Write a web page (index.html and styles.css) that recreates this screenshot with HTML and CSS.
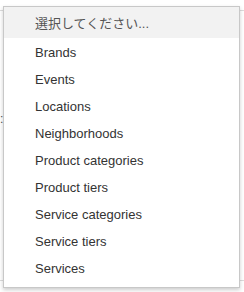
FILE: index.html
```html
<!DOCTYPE html>
<html>
<head>
<meta charset="utf-8">
<link rel="stylesheet" href="styles.css">
</head>
<body>
<div class="page">
  <div class="field">
    <span class="colon">:</span>
  </div>
  <div class="menu">
    <div class="item placeholder">選択してください...</div>
    <div class="item">Brands</div>
    <div class="item">Events</div>
    <div class="item">Locations</div>
    <div class="item">Neighborhoods</div>
    <div class="item">Product categories</div>
    <div class="item">Product tiers</div>
    <div class="item">Service categories</div>
    <div class="item">Service tiers</div>
    <div class="item">Services</div>
  </div>
</div>
</body>
</html>
```
FILE: styles.css
```css
html, body {
  margin: 0;
  padding: 0;
  background: #fff;
}
.page {
  position: relative;
  width: 244px;
  height: 292px;
  overflow: hidden;
  font-family: "Liberation Sans", Arial, "Noto Sans CJK JP", sans-serif;
}
.field {
  margin-top: 10px;
  height: 269px;
  border-top: 1px solid #dcdcdc;
  border-bottom: 1px solid #dcdcdc;
  position: relative;
}
.colon {
  position: absolute;
  left: 0;
  top: 101px;
  font-size: 12px;
  color: #555;
  line-height: 14px;
}
.menu {
  position: absolute;
  left: 3px;
  top: 6px;
  width: 235px;
  height: 280px;
  border: 1px solid #c8c8c8;
  background: #fff;
  box-shadow: 0 2px 4px rgba(0, 0, 0, 0.2);
  display: flex;
  flex-direction: column;
}
.item {
  height: 26px;
  padding-top: 1px;
  line-height: 27px;
  padding-left: 31px;
  font-size: 13px;
  color: #333;
}
.placeholder {
  height: 30px;
  line-height: 31px;
  background: #f2f2f2;
  color: #555;
  font-size: 13px;
}
```
